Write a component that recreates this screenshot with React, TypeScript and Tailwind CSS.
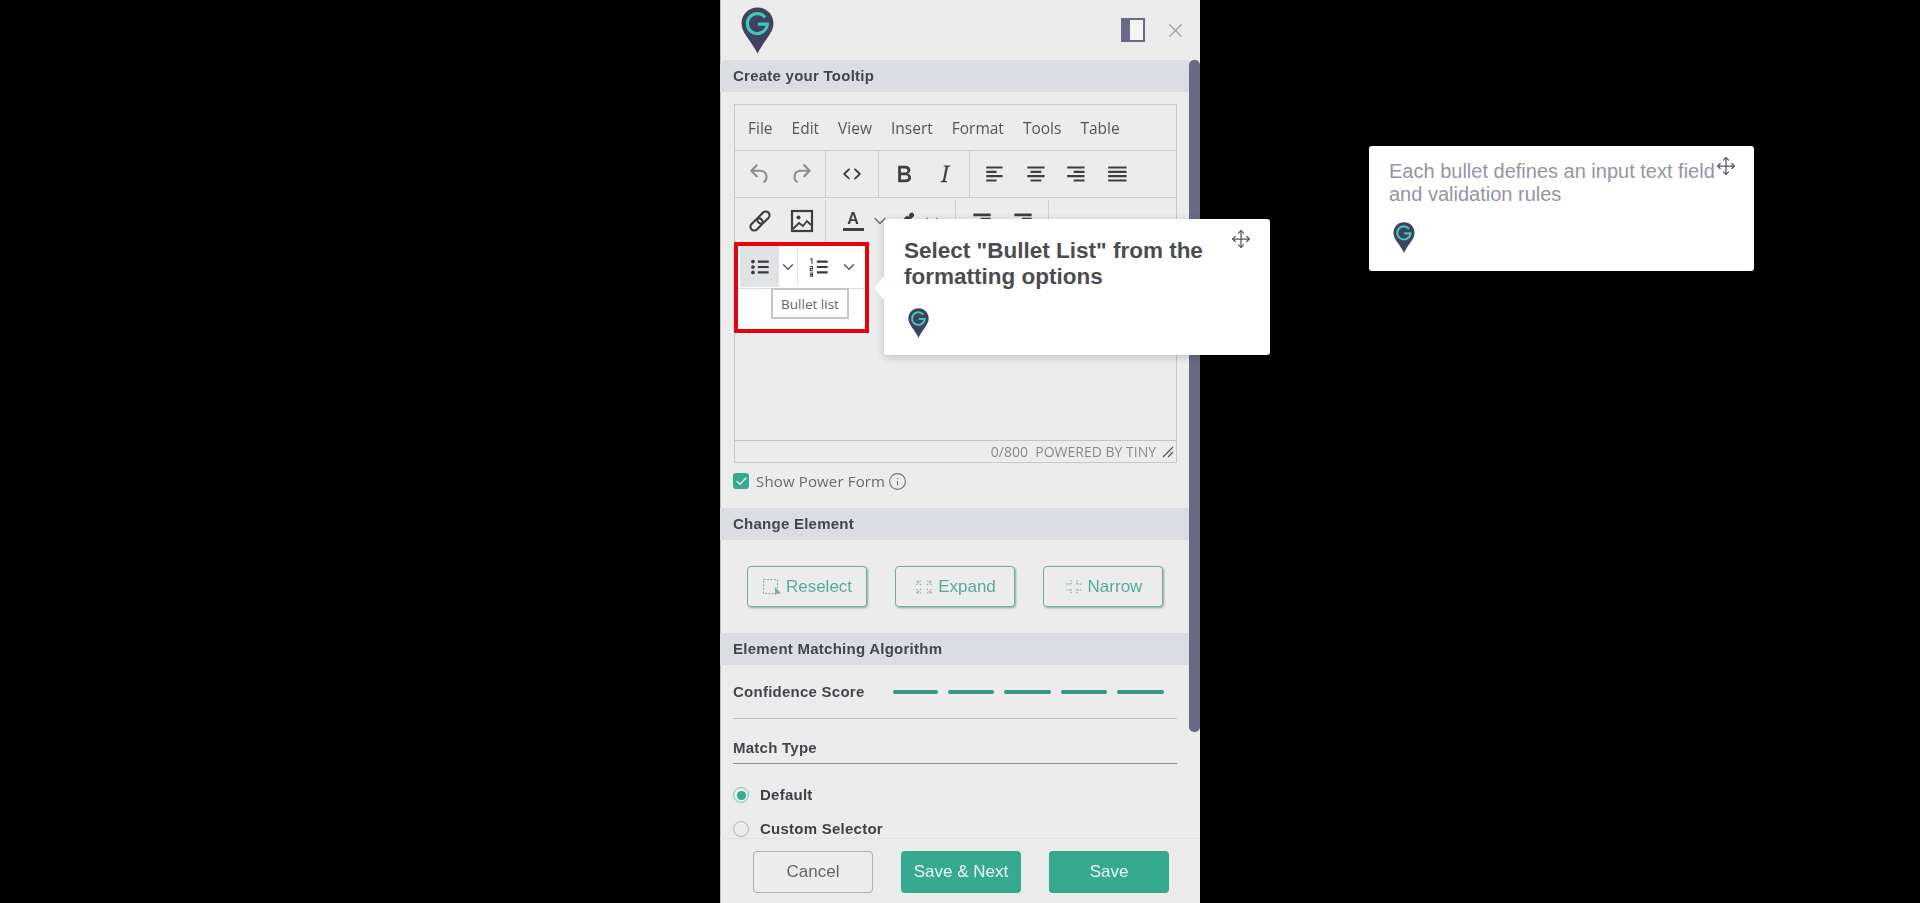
import React from "react";
import { Move, ChevronDown, Info, Check, X } from "lucide-react";

const P = {
  undo: "M6.4 8H12c3.7 0 6.2 2 6.8 5.1.6 2.7-.4 5.6-2.3 6.8a1 1 0 0 1-1-1.8c1.1-.6 1.8-2.7 1.4-4.6-.5-2.1-2.1-3.5-4.9-3.5H6.4l3.3 3.3a1 1 0 1 1-1.4 1.4l-5-5a1 1 0 0 1 0-1.4l5-5a1 1 0 0 1 1.4 1.4L6.4 8z",
  redo: "M17.6 10H12c-2.8 0-4.4 1.4-4.9 3.5-.4 2 .3 4 1.4 4.6a1 1 0 1 1-1 1.8c-2-1.2-2.9-4.1-2.3-6.8.6-3 3-5.1 6.8-5.1h5.6l-3.3-3.3a1 1 0 1 1 1.4-1.4l5 5a1 1 0 0 1 0 1.4l-5 5a1 1 0 0 1-1.4-1.4l3.3-3.3z",
  code: "M9.8 15.7c.3.3.3.8 0 1-.3.4-.9.4-1.2 0l-4.4-4.1a.8.8 0 0 1 0-1.2l4.4-4.2c.3-.3.9-.3 1.2 0 .3.3.3.8 0 1.1L6 12l3.8 3.7zm4.4 0L18 12l-3.8-3.7a.7.7 0 0 1 0-1.1c.3-.3.9-.3 1.2 0l4.4 4.2c.3.3.3.9 0 1.2l-4.4 4.2c-.3.3-.9.3-1.2 0a.7.7 0 0 1 0-1z",
  bold: "M7.8 19c-.3 0-.5 0-.6-.2l-.2-.5V5.7c0-.2 0-.4.2-.5l.6-.2h5c1.5 0 2.7.3 3.5 1 .7.6 1.1 1.4 1.1 2.5a3 3 0 0 1-.6 1.9c-.4.6-1 1-1.6 1.2.4.1.9.3 1.3.6s.8.7 1 1.2c.4.4.5 1 .5 1.6 0 1.3-.4 2.3-1.3 3-.8.7-2.1 1-3.8 1H7.8zm5-8.3c.6 0 1.2-.1 1.6-.5.4-.3.6-.7.6-1.3 0-1.1-.8-1.7-2.3-1.7H9.3v3.5h3.4zm.5 6c.7 0 1.3-.1 1.7-.4.4-.4.6-.9.6-1.5s-.2-1-.7-1.4c-.4-.3-1-.4-2-.4H9.4v3.8h4z",
  italic: "M16.7 4.7l-.1.9h-.3c-.6 0-1 0-1.4.3-.3.3-.4.6-.5 1.1l-2.1 9.8v.6c0 .5.4.8 1.4.8h.2l-.2.8H8l.2-.8h.2c1.1 0 1.8-.5 2-1.5l2-9.8.1-.5c0-.6-.4-.8-1.4-.8h-.3l.2-.9h5.800z",
  left: "M3 5h15v2H3zM3 9h9.500v2H3zM3 13h15v2H3zM3 17h9.500v2H3z",
  center: "M3 5h16v2H3zM6 9h10v2H6zM3 13h16v2H3zM6 17h10v2H6z",
  right: "M2 5h16v2H2zM8 9h10v2H8zM2 13h16v2H2zM8 17h10v2H8z",
  justify: "M2 5h17v2H2zM2 9h17v2H2zM2 13h17v2H2zM2 17h17v2H2z",
  outdent: "M4 5h16v2.500H4zM11 9h9v2h-9zM11 13h9v2h-9zM4 17h16v2H4z",
  brush: "M14.500 4.500a2.800 2.800 0 1 1 3.500 3.800l-1.500.8 3 3-7 6.500-6.500-6.500 6-6 1.800 1.500z",
};

function Tiny({ d, className }: { d: string; className: string }) {
  return (
    <svg viewBox="0 0 24 24" fill="currentColor" className={className}>
      <path d={d} />
    </svg>
  );
}

function Pin({ className }: { className: string }) {
  return (
    <svg viewBox="0 0 33 47" className={className}>
      <path d="M16.5 0.5C7.4 0.5 0.5 7.6 0.5 16.6c0 9.6 8.9 15.8 16 29.9 7.1-14.1 16-20.3 16-29.9C32.5 7.6 25.600 0.5 16.500 0.500z" fill="#3f4260" />
      <path d="M24.200 10.400A10 10 0 1 0 26.300 17.200H16.800" fill="none" stroke="#41c7b4" strokeWidth="3.200" />
    </svg>
  );
}

function Btn({ d, muted, big }: { d: string; muted?: boolean; big?: boolean }) {
  const tone = muted ? "text-[#8f8f8f]" : "text-[#3f3f3f]";
  return (
    <div className="flex h-full w-[41px] shrink-0 items-center justify-center">
      <Tiny d={d} className={big ? `size-[28px] ${tone}` : `size-[26px] ${tone}`} />
    </div>
  );
}

function Section({ title, first }: { title: string; first?: boolean }) {
  return (
    <div className={`flex h-8 items-center bg-[#dcdce3] pl-[13px] text-[15px] font-bold tracking-[0.25px] text-[#45454d] ${first ? "rounded-tl-md" : ""}`}>
      {title}
    </div>
  );
}

function SelectIcon({ kind }: { kind: "re" | "ex" | "na" }) {
  return (
    <svg viewBox="0 0 20 20" className="size-5 text-[#5f9e92] opacity-80" fill="none" stroke="currentColor" strokeWidth="1.100">
      {kind === "re" && (
        <>
          <rect x="1.500" y="2.500" width="14" height="14" strokeDasharray="2 1.500" />
          <path d="M13 10v8.500l2-2h4z" fill="currentColor" stroke="none" />
        </>
      )}
      {kind === "ex" && (
        <path strokeDasharray="1.500 1.200" d="M3 4h4M13 4h4M3 16h4M13 16h4M3 4v4M17 4v4M3 12v4M17 12v4M7 8L4 5M13 8l3-3M7 12l-3 3M13 12l3 3" />
      )}
      {kind === "na" && (
        <path strokeDasharray="1.500 1.200" d="M2 7h5M13 7h5M2 13h5M13 13h5M7 3v5M13 3v5M7 12v5M13 12v5" />
      )}
    </svg>
  );
}

function OutlineBtn({ label, kind, w }: { label: string; kind: "re" | "ex" | "na"; w: string }) {
  return (
    <div className={`flex h-[41px] items-center justify-center gap-[4px] rounded-[4px] border border-[#73aea2] text-[17px] text-[#55ac9a] shadow-[1px_1px_2px_rgba(60,110,100,0.55)] ${w}`}>
      <SelectIcon kind={kind} />
      <span>{label}</span>
    </div>
  );
}

function Dash({ w }: { w: string }) {
  return <div className={`h-[4px] rounded-full bg-[#399883] ${w}`} />;
}

function Radio({ on, label }: { on?: boolean; label: string }) {
  return (
    <div className="flex h-[20px] items-center gap-[11px]">
      <div className={`flex size-[16px] items-center justify-center rounded-full border ${on ? "border-[#7cc4b5]" : "border-[#b5b5b5]"}`}>
        {on && <div className="size-[9px] rounded-full bg-[#36a991]" />}
      </div>
      <span className="text-[15px] font-bold tracking-[0.25px] text-[#3f3f47]">{label}</span>
    </div>
  );
}

export default function App() {
  const sans = { fontFamily: '"Liberation Sans", Arial, sans-serif' };
  const open = { fontFamily: '"Open Sans", sans-serif' };
  return (
    <div className="relative h-[903px] w-full overflow-hidden bg-black" style={sans}>
      {/* side panel */}
      <div className="ml-[720px] flex h-[903px] w-[480px] flex-col bg-[#ececec] shadow-[inset_1px_0_0_#bdbdbd] blur-[0.4px]">
        <div className="flex h-[60px] items-center justify-between pr-[13px] pl-[21px]">
          <Pin className="h-[47px] w-[33px]" />
          <div className="flex items-center gap-[19px]">
            <div className="flex h-[24px] w-[24px] border-[2px] border-[#6a6a85] bg-[#f4f4f4]">
              <div className="h-full w-[7px] bg-[#6a6a85]" />
            </div>
            <X className="size-[23px] text-[#a4a4a4]" strokeWidth={1.500} />
          </div>
        </div>

        <div className="flex h-[778px] overflow-hidden">
          <div className="h-[778px] w-[469px] shrink-0 overflow-hidden">
            <Section title="Create your Tooltip" first />

            {/* editor */}
            <div className="mt-3 mr-3 ml-[14px] flex h-[359px] flex-col border border-[#c9c9c9]" style={open}>
              <div className="flex h-[46px] shrink-0 items-center gap-[19px] border-b border-[#cfcfcf] pt-[2px] pl-[13px] text-[15.5px] text-[#555]">
                <span>File</span><span>Edit</span><span>View</span><span>Insert</span><span>Format</span><span>Tools</span><span>Table</span>
              </div>
              <div className="flex h-[47px] shrink-0 border-b border-[#cfcfcf]">
                <div className="flex w-[91px] items-center justify-center border-r border-[#cfcfcf]">
                  <Btn d={P.undo} muted /><Btn d={P.redo} muted />
                </div>
                <div className="flex w-[53px] items-center justify-center border-r border-[#cfcfcf]"><Btn d={P.code} /></div>
                <div className="flex w-[91px] items-center justify-center border-r border-[#cfcfcf]">
                  <Btn d={P.bold} big /><Btn d={P.italic} big />
                </div>
                <div className="flex items-center pl-[5px]">
                  <Btn d={P.left} /><Btn d={P.center} /><Btn d={P.right} /><Btn d={P.justify} />
                </div>
              </div>
              <div className="flex h-[44px] shrink-0 pt-[2px] text-[#3f3f3f]">
                <div className="flex w-[91px] items-center justify-center gap-[17px] border-r border-[#cfcfcf]">
                  <svg viewBox="0 0 24 24" className="size-[26px]" fill="none" stroke="currentColor" strokeWidth="2">
                    <g transform="rotate(-45 12 12)">
                      <rect x="1" y="8.500" width="13" height="7" rx="3.500" />
                      <rect x="10" y="8.500" width="13" height="7" rx="3.500" />
                    </g>
                  </svg>
                  <svg viewBox="0 0 24 24" className="size-[24px]" fill="none" stroke="currentColor" strokeWidth="2.200">
                    <rect x="2" y="2" width="20" height="20" />
                    <circle cx="8.500" cy="8.500" r="2" fill="currentColor" stroke="none" />
                    <path d="M3 20l6-6 4 3 4-5 4 4" strokeWidth="1.800" />
                  </svg>
                </div>
                <div className="flex w-[130px] items-center border-r border-[#cfcfcf] pl-[16px]">
                  <div className="flex w-[22px] flex-col items-center" style={sans}>
                    <span className="text-[16px] leading-[15px] font-bold">A</span>
                    <div className="mt-[2px] h-[3px] w-[21px] bg-[#3f3f3f]" />
                  </div>
                  <ChevronDown className="ml-[6px] size-5 text-[#666]" strokeWidth={1.500} />
                  <Tiny d={P.brush} className="ml-[6px] size-[22px]" />
                  <ChevronDown className="ml-[4px] size-5 text-[#666]" strokeWidth={1.500} />
                </div>
                <div className="flex w-[93px] items-center justify-center border-r border-[#cfcfcf]">
                  <Btn d={P.outdent} /><Btn d={P.outdent} />
                </div>
              </div>
              <div className="flex-1" />
              <div className="flex h-[22px] shrink-0 items-center justify-end gap-[6px] border-t border-[#c4c4c4] pr-[2px] text-[14px] text-[#8a8a8a]">
                <span>0/800&nbsp; POWERED BY TINY</span>
                <svg viewBox="0 0 12 12" className="size-[12px]" stroke="#555" strokeWidth="1.200">
                  <path d="M1 11L11 1M6 11l5-5" />
                </svg>
              </div>
            </div>

            {/* show power form */}
            <div className="mt-[9px] ml-[13px] flex h-[18px] items-center">
              <div className="flex size-[16px] items-center justify-center rounded-[3px] bg-[#36a991]">
                <Check className="size-[13px] text-[#d8f0ea]" strokeWidth={3} />
              </div>
              <span className="ml-[7px] text-[15px] tracking-[0.15px] text-[#6a6a6a]" style={open}>Show Power Form</span>
              <Info className="ml-[3px] size-[19px] text-[#777]" strokeWidth={1.500} />
            </div>

            <div className="mt-[18px]"><Section title="Change Element" /></div>
            <div className="mt-[26px] ml-[27px] flex gap-[28px]">
              <OutlineBtn label="Reselect" kind="re" w="w-[120px]" />
              <OutlineBtn label="Expand" kind="ex" w="w-[120px]" />
              <OutlineBtn label="Narrow" kind="na" w="w-[120px]" />
            </div>
            <div className="mt-[26px]"><Section title="Element Matching Algorithm" /></div>

            <div className="mr-3 ml-[13px] flex h-[54px] items-center border-b border-[#c2c2c2]">
              <span className="w-[160px] pt-[1px] text-[15px] font-bold tracking-[0.25px] text-[#45454d]">Confidence Score</span>
              <div className="flex gap-[10px]">
                <Dash w="w-[45px]" /><Dash w="w-[46px]" /><Dash w="w-[47px]" /><Dash w="w-[46px]" /><Dash w="w-[47px]" />
              </div>
            </div>
            <div className="mr-3 ml-[13px] flex h-[45px] items-end border-b border-[#8e8e8e] pb-[4px] text-[15px] font-bold tracking-[0.25px] text-[#45454d]">
              Match Type
            </div>
            <div className="mt-[21px] ml-[13px] flex flex-col gap-[14px]">
              <Radio on label="Default" />
              <Radio label="Custom Selector" />
            </div>
          </div>
          <div className="h-[672px] w-[11px] rounded-[5px] bg-[#6a6a85]" />
        </div>

        {/* footer */}
        <div className="flex flex-1 gap-[28px] border-t border-[#e2e2e2] pt-[12px] pl-[33px] text-[17px]">
          <div className="flex h-[42px] w-[120px] items-center justify-center rounded-[4px] border border-[#b0b0b0] text-[#666]">Cancel</div>
          <div className="flex h-[42px] w-[120px] items-center justify-center rounded-[4px] bg-[#36a991] text-[#eef7f5]">Save &amp; Next</div>
          <div className="flex h-[42px] w-[120px] items-center justify-center rounded-[4px] bg-[#36a991] text-[#eef7f5]">Save</div>
        </div>
      </div>

      {/* highlighted area */}
      <div className="absolute top-[242px] left-[734px] h-[91px] w-[135px] border-[4px] border-[#e8000b] bg-white">
        <div className="flex h-[43px] border-b border-[#dcdcdc]">
          <div className="ml-[2px] flex h-[41px] w-[39px] items-center justify-center bg-[#e0e2e5]">
            <svg viewBox="0 0 24 24" className="size-[26px] text-[#3a3a3a]" fill="currentColor">
              <path d="M10 6h10v2H10zM10 11h10v2H10zM10 16h10v2H10z" />
              <circle cx="5.500" cy="7" r="1.700" /><circle cx="5.500" cy="12" r="1.700" /><circle cx="5.500" cy="17" r="1.700" />
            </svg>
          </div>
          <div className="flex h-[41px] w-[19px] items-center justify-center rounded-r-[3px] border-r border-[#e6e6e6]">
            <ChevronDown className="size-[18px] text-[#555]" strokeWidth={1.800} />
          </div>
          <div className="ml-[7px] flex h-[41px] w-[27px] items-center justify-center">
            <svg viewBox="0 0 24 24" className="size-[26px] text-[#3a3a3a]" fill="currentColor">
              <path d="M10 6h10v2H10zM10 11h10v2H10zM10 16h10v2H10z" />
              <path d="M4 4h2v5H5V5H4zM3.500 11h3v3h-2v1h2v1h-3v-3h2v-1h-2zM3.500 17h3v4h-3v-1h2v-.5h-2v-1h2V18h-2z" />
            </svg>
          </div>
          <div className="ml-[8px] flex h-[41px] items-center">
            <ChevronDown className="size-[18px] text-[#555]" strokeWidth={1.800} />
          </div>
        </div>
        <div className="-mt-[1px] ml-[33px] flex h-[31px] w-[78px] items-center justify-center border-[2px] border-[#c6c6c6] bg-white pt-[1px] text-[13.5px] text-[#666]" style={open}>
          Bullet list
        </div>
      </div>

      {/* step tooltip */}
      <div className="absolute top-[219px] left-[884px] h-[136px] w-[386px] rounded-[3px] bg-white pt-[19px] pl-[20px] shadow-[0_2px_8px_rgba(0,0,0,0.2)]">
        <div className="absolute top-[57px] -left-[10px] h-0 w-0 border-y-[12px] border-r-[10px] border-y-transparent border-r-white" />
        <Move className="absolute top-[10px] right-[19px] size-[20px] text-[#555]" strokeWidth={1.500} />
        <div className="w-[320px] text-[22.5px] leading-[26px] font-bold text-[#4c4c50]">
          Select "Bullet List" from the formatting options
        </div>
        <Pin className="mt-[18px] ml-[4px] h-[30px] w-[21px]" />
      </div>

      {/* next tooltip */}
      <div className="absolute top-[146px] left-[1369px] h-[125px] w-[385px] rounded-[3px] bg-white pt-[14px] pl-[20px]">
        <Move className="absolute top-[10px] left-[347px] size-[20px] text-[#555]" strokeWidth={1.500} />
        <div className="w-[340px] text-[20px] leading-[23px] text-[#9494a8]">
          Each bullet defines an input text field and validation rules
        </div>
        <Pin className="mt-[16px] ml-[4px] h-[31px] w-[22px]" />
      </div>
    </div>
  );
}
